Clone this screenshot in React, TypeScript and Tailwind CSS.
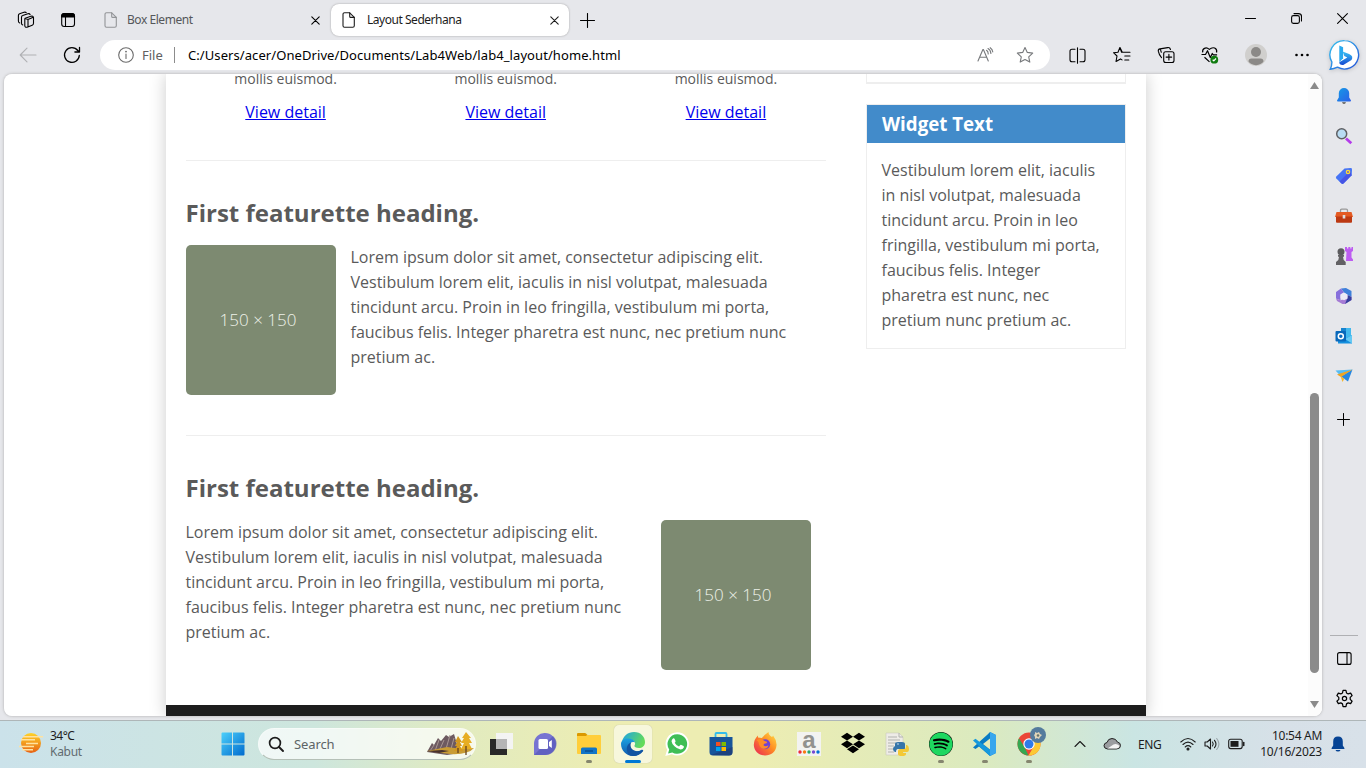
import React from 'react';
import { FaDropbox, FaSpotify } from 'react-icons/fa';

const LOREM =
  'Lorem ipsum dolor sit amet, consectetur adipiscing elit. Vestibulum lorem elit, iaculis in nisl volutpat, malesuada tincidunt arcu. Proin in leo fringilla, vestibulum mi porta, faucibus felis. Integer pharetra est nunc, nec pretium nunc pretium ac.';

type IconProps = { className?: string; children: React.ReactNode; box?: string };

function Line({ className = 'size-5', children, box = '0 0 20 20' }: IconProps) {
  return (
    <svg viewBox={box} className={`shrink-0 ${className}`} fill="none" stroke="currentColor" strokeWidth="1.1" strokeLinecap="round" strokeLinejoin="round">
      {children}
    </svg>
  );
}

function Art({ className = 'size-6', children, box = '0 0 24 24' }: IconProps) {
  return (
    <svg viewBox={box} className={`shrink-0 ${className}`}>
      {children}
    </svg>
  );
}

const FileIcon = () => (
  <Line className="h-4 w-3.5" box="0 0 14 16">
    <path d="M2.5.8h5.2l4.6 4.6v8.3a1.5 1.5 0 0 1-1.5 1.5H2.5A1.5 1.5 0 0 1 1 13.700V2.300A1.500 1.500 0 0 1 2.500.8Z" />
    <path d="M7.700.8v3.600a1 1 0 0 0 1 1h3.600" />
  </Line>
);

const CloseIcon = () => (
  <Line className="size-[9px]" box="0 0 9 9">
    <path d="m.8.8 7.400 7.400M8.200.8.8 8.200" />
  </Line>
);

function TabBar() {
  return (
    <div className="flex h-10 items-start text-[12px]">
      <div className="flex h-10 w-[103px] items-center pl-[17px]">
        <Line className="size-[18px] text-black" box="0 0 18 18">
          <path d="M8.200 7.200 13.800 5.300q2.400-.6 2.700 1.400v5.500q0 1.500-1.300 2l-4.500 1.900q-2.500.8-2.900-1.300V8.300q0-.8.4-1.100ZM8.200 7.500l2.800 1 5.200-2.300M11 8.600v7.200" />
          <path d="M5.800 14q-1.300-.3-1.300-1.800V6.300q0-1.300 1.200-1.700l5.200-1.900q1.600-.4 2.200.7" />
          <path d="M2.700 12Q1.400 11.500 1.400 10V4.500q0-1.300 1.200-1.700L7 1.300q1.500-.4 2.200.3" />
        </Line>
        <Line className="ml-[25px] size-4 text-black" box="0 0 16 16">
          <rect x="1.700" y="1.700" width="12.800" height="12.800" rx="2.500" />
          <path d="M1.700 5V4q0-2.400 2.400-2.400h8q2.400 0 2.400 2.400v1Z" fill="currentColor" />
          <path d="M5.500 5v9.500" />
        </Line>
      </div>
      <div className="flex h-10 w-[228px] items-center pl-[1px] text-[#55575a]">
        <span className="text-[#929497]"><FileIcon /></span>
        <span className="ml-[9px] w-[181px] tracking-[-0.45px]">Box Element</span>
        <span className="ml-[3px] text-black"><CloseIcon /></span>
      </div>
      <div className="mt-1 flex h-8 w-[238px] items-center rounded-lg bg-white pl-[11px] text-[#1c1c1c] shadow-[0_0_2px_#999]">
        <FileIcon />
        <span className="ml-[11px] w-[180px] tracking-[-0.47px]">Layout Sederhana</span>
        <span className="ml-[3px]"><CloseIcon /></span>
      </div>
      <Line className="mt-[13px] ml-[11px] size-[15px] text-black" box="0 0 15 15"><path d="M7.500.5v14M.5 7.500h14" /></Line>
      <div className="ml-auto flex h-[37px] items-center text-black">
        <Line className="size-[11px]" box="0 0 11 11"><path d="M.5 5.500h10" /></Line>
        <Line className="ml-[35px] size-[11px]" box="0 0 11 11">
          <rect x=".6" y="2.600" width="7.800" height="7.800" rx="1.800" />
          <path d="M3 .6h4.500q3 0 3 3V8" />
        </Line>
        <Line className="mr-[18px] ml-[35px] size-[11px]" box="0 0 11 11"><path d="m.6.6 9.800 9.800M10.400.6.6 10.400" /></Line>
      </div>
    </div>
  );
}

function Toolbar() {
  return (
    <div className="flex h-[34px] items-start text-black">
      <div className="flex h-[30px] w-[100px] items-center pl-[19px]">
        <Line className="h-4 w-[18px] text-[#b0b1b4]" box="0 0 18 16"><path d="M17 8H1.200M8 1.200 1.200 8 8 14.800" /></Line>
        <Line className="ml-[26px] size-[18px]" box="0 0 18 18">
          <path strokeWidth="1.300" d="M16.300 9.500A7.400 7.400 0 1 1 14.800 4.500l1.400 1.300M16.500 1.500v4.500h-4.600" />
        </Line>
      </div>
      <div className="flex h-[30px] w-[950px] items-center rounded-full bg-white pl-[18px] text-[14px]">
        <Line className="size-4 text-[#6b6b6b]" box="0 0 16 16">
          <circle cx="8" cy="8" r="7.300" /><path d="M8 7v4.500" /><circle cx="8" cy="4.600" r=".4" />
        </Line>
        <span className="ml-2 w-8 pt-px text-[13px] text-[#606060]">File</span>
        <span className="h-4 w-px bg-[#8c8c8c]" />
        <span className="ml-[13px] w-[760px] pt-px text-[13px] tracking-[0.08px] whitespace-nowrap">C:/Users/acer/OneDrive/Documents/Lab4Web/lab4_layout/home.html</span>
        <Line className="ml-[29px] h-4 w-[17px] text-[#77797c]" box="0 0 17 16">
          <path d="M1 14 5.900 2.500h.5L11.300 14M2.700 10.200h6.900M9.500 3.300q1.800 1.200 1.700 3.600M11 1.500q2.700 1.500 2.900 5M13.200.7q2.300 1.500 2.600 4.300" />
        </Line>
        <Line className="ml-[22px] size-[18px] text-[#77797c]" box="0 0 18 18">
          <path d="m9 1.500 2.300 4.900 5.400.7-4 3.700 1.100 5.300L9 13.500l-4.800 2.600 1.100-5.300-4-3.700 5.400-.7Z" />
        </Line>
      </div>
      <div className="ml-[19px] flex h-[30px] items-center">
        <Line className="size-[17px]" box="0 0 17 17">
          <path d="M6 2.200H3q-2 0-2 2v8.600q0 2 2 2h3M11 2.200h3q2 0 2 2v8.600q0 2-2 2h-3M8.500.7v15.600" />
        </Line>
        <Line className="ml-[27px] size-[18px]" box="0 0 18 18">
          <path d="m10.800 6.300-2.200-.1L6.900 1.500 5 6.200l-4.500.5L4 10l-1 5.500 4.500-2.600 1.500 1M7 1.500l2.300 4.800H17M11.800 10H17M11.800 14h4" />
        </Line>
        <Line className="ml-[26px] size-[18px]" box="0 0 18 18">
          <rect x="6.700" y="5.700" width="10.300" height="10.800" rx="2" /><path d="M11.900 8.300v5.600M9.100 11.100h5.600M13.500 3.500q-.6-2.300-2.800-1.900L3 2.900Q1 3.300 1.300 5.200q.8 4 3.200 6.500M3.500 2.800q.1 2 .8 3.500" />
        </Line>
        <svg viewBox="0 0 18 18" className="ml-[26px] size-[18px]" fill="none" stroke="currentColor" strokeWidth="1.200" strokeLinejoin="round">
          <path d="M1.700 6.400C1 2.500 5 .5 8.300 3.400 12 .2 16.500 2 15.600 6.500M3.500 11.200l5 4.700M.5 8.500h4l2-3.800 2.800 6.800 2-4 1 1.300h3.800" />
          <circle cx="13.300" cy="13.700" r="3.900" fill="#107c10" stroke="none" /><path d="m11.700 13.800 1.100 1 2.200-2.300" stroke="#fff" />
        </svg>
        <svg viewBox="0 0 22 22" className="ml-[26px] size-[22px]">
          <circle cx="11" cy="11" r="11" fill="#d0cfcd" /><circle cx="11" cy="8" r="5" fill="#8b8987" /><path d="M3.500 17.500q0-3 3-3h9q3 0 3 3-2.300 3.300-7.500 3.700-5.200-.4-7.500-3.700" fill="#8b8987" />
        </svg>
        <Line className="ml-[27px] h-1 w-4" box="0 0 16 4"><g fill="currentColor" stroke="none"><circle cx="2.500" cy="2" r="1.300" /><circle cx="8" cy="2" r="1.300" /><circle cx="13.500" cy="2" r="1.300" /></g></Line>
        <svg viewBox="0 0 32 32" className="ml-[18px] size-8 drop-shadow-sm">
          <defs>
            <linearGradient id="ring" x1="0" y1="0" x2="1" y2="1"><stop stopColor="#35c2ee" /><stop offset="1" stopColor="#2352d9" /></linearGradient>
            <linearGradient id="bing" x1="0" y1="0" x2="0" y2="1"><stop stopColor="#38c0f3" /><stop offset="1" stopColor="#164bd3" /></linearGradient>
          </defs>
          <path d="M16.500 1.600a14.200 14.200 0 1 1-7 26.600q-3.800 1.700-7.200 2 1.500-2.800 1.600-7.200A14.200 14.200 0 0 1 16.500 1.600" fill="#fff" stroke="url(#ring)" strokeWidth="1.400" />
          <path d="m11.300 6.500 3.800 1.700v11l-3.800 4Z" fill="#29a9ee" />
          <path d="m11.300 23.200 8-4.600-3-1.600-1.700-4.400 6.500 2.500q4.800 2 2.400 6l-8.200 4.800q-4 .4-4-2.700" fill="url(#bing)" />
        </svg>
      </div>
    </div>
  );
}

const HeadingStyle = 'mt-[34px] h-9 text-[24px] leading-9 font-bold';

const Placeholder = ({ className = '' }: { className?: string }) => (
  <div className={`flex size-[150px] shrink-0 items-center justify-center rounded-[5px] bg-[#7d8a71] pr-[5px] pb-[2px] text-[17px] font-light text-[#edf2e9] ${className}`}>
    150 × 150
  </div>
);

function Page() {
  return (
    <div className="mx-[162px] flex h-[642px] w-[980px] shrink-0 flex-col bg-white font-['Open_Sans',sans-serif] text-[16px] leading-[25px] text-[#5a5a5a] shadow-[0_0_16px_#ccc]">
      <div className="flex h-[631px] gap-10 px-5">
        <main className="-ml-[0.5px] w-[640.5px]">
          <div className="grid h-[86px] grid-cols-3 gap-5 text-center">
            {['one', 'two', 'three'].map((column) => (
              <div key={column}>
                <p className="-mt-2 text-[14px]">mollis euismod.</p>
                <p className="mt-[9px]"><a className="text-[#0000ee] underline" href="#detail">View detail</a></p>
              </div>
            ))}
          </div>
          <section className="h-[275px] border-t border-[#eee]">
            <h2 className={HeadingStyle}>First featurette heading.</h2>
            <div className="mt-[14px] flex gap-[15px]">
              <Placeholder />
              <p>{LOREM}</p>
            </div>
          </section>
          <section className="border-t border-[#eee]">
            <h2 className={HeadingStyle}>First featurette heading.</h2>
            <div className="mt-[14px] flex gap-[15px]">
              <p className="w-[460px]">{LOREM}</p>
              <Placeholder />
            </div>
          </section>
        </main>
        <aside className="w-[260px]">
          <div className="h-2.5 border-x border-b-2 border-[#eee]" />
          <div className="mt-5 h-[245px] border border-[#eee]">
            <h3 className="h-[38px] bg-[#428bca] px-[15px] text-[18.720px] leading-[38px] font-bold text-white">Widget Text</h3>
            <p className="pt-[15px] pr-5 pl-[14.500px]">Vestibulum lorem elit, iaculis in nisl volutpat, malesuada tincidunt arcu. Proin in leo fringilla, vestibulum mi porta, faucibus felis. Integer pharetra est nunc, nec pretium nunc pretium ac.</p>
          </div>
        </aside>
      </div>
      <footer className="h-[11px] bg-[#1d1d1d]" />
    </div>
  );
}

function Scrollbar() {
  return (
    <div className="flex w-[15px] flex-col items-center bg-[#fcfcfc] pr-px">
      <svg viewBox="0 0 9 7" className="mt-2 h-[7px] w-[9px]"><path d="M4.500 0 9 7H0Z" fill="#8b8b8b" /></svg>
      <div className="mt-[304px] h-[280px] w-[9px] rounded-full bg-[#8b8b8b]" />
      <svg viewBox="0 0 9 7" className="mt-[28px] h-[7px] w-[9px]"><path d="M0 0h9L4.500 7Z" fill="#8b8b8b" /></svg>
    </div>
  );
}

function SideRail() {
  const cell = 'flex h-10 items-center justify-center';
  return (
    <div className="flex w-11 flex-col pt-[2px] text-black">
      <div className={cell}>
        <Art className="size-[18px]" box="0 0 18 18">
          <path d="M7 15h4l-1 2H8Z" fill="#777" /><path d="M9 1a5.200 5.200 0 0 1 5.200 5v4.500l1.800 3q.2 1-1 1H3q-1.200 0-1-1l1.800-3V6A5.200 5.200 0 0 1 9 1" fill="url(#railBell)" />
          <defs><linearGradient id="railBell" x1="0" x2="1" y2="1"><stop stopColor="#159be6" /><stop offset="1" stopColor="#2c5fe8" /></linearGradient></defs>
        </Art>
      </div>
      <div className={cell}>
        <Art className="size-[18px]" box="0 0 18 18">
          <path d="m11 11.500 5.300 4.800" stroke="#b43bea" strokeWidth="2.800" /><circle cx="6.700" cy="6.700" r="5" fill="#b8dcf3" stroke="#5f6064" strokeWidth="1.500" />
        </Art>
      </div>
      <div className={cell}>
        <Art className="size-[18px]" box="0 0 18 18">
          <path d="m9.500 1.500 6.200-.4q1.300 0 1.300 1.300l-.3 5.800L8.500 16.600q-1 .9-2 0L1.300 11.400q-.8-1 0-1.900Z" fill="#4674f5" /><path d="m16.700 8.200-8.200 8.400q-1 .9-2 0l-2-2L15 4Z" fill="#4654e5" /><circle cx="13" cy="5" r="1.700" fill="#7b6ebb" stroke="#ffdc33" strokeWidth="1.200" />
        </Art>
      </div>
      <div className={cell}>
        <Art className="size-[18px]" box="0 0 18 18">
          <path d="M5.500 5V3.500q0-1.300 1.300-1.300h4.400q1.300 0 1.300 1.300V5" fill="none" stroke="#999" strokeWidth="1.300" /><path d="M1.500 5h15L18 10H0Z" fill="#e45a22" /><path d="M1 9.500h16V15q0 .8-1 .8H2q-1 0-1-.8Z" fill="#bc3912" /><rect x="7.700" y="8" width="2.600" height="3.500" fill="#ddd" />
        </Art>
      </div>
      <div className={cell}>
        <Art className="size-[18px]" box="0 0 18 18">
          <path d="M10 0h2v1.500h1.300V0h2v1.500h1.200V0H18v4l-1.500 1v5.500l1.500 2v1.500h-7l.5-9L10 4Z" fill="#bd5df1" /><circle cx="6" cy="4.800" r="3.500" fill="#5b5b5e" /><path d="M3 8h6v1.800H8L8.700 13l2 2v3H1v-3l2.300-2L4 9.800H3Z" fill="#626164" />
        </Art>
      </div>
      <div className={cell}>
        <Art className="size-[18px]" box="0 0 18 18">
          <path d="M6 1.500 11 1 16.500 4v6L12.500 8 9 5.500Z" fill="#3f80da" /><path d="m1 5 5-3.500 3 4L5.500 8v5.300L1 11.500Z" fill="#8770dc" /><path d="m1 11.500 4.500 1.800 3.500-1 3.500-2V8l4 2v3L10 17H7.500L2 14Z" fill="#a57bd4" /><path d="M12.500 8 16.500 10v3L10 17l2.500-6Z" fill="#353f9c" /><path d="m9 5.500 3.500 2v4L9 13.300l-3.500-2v-4Z" fill="#eceaf6" />
        </Art>
      </div>
      <div className={cell}>
        <Art className="size-[18px]" box="0 0 18 18">
          <path d="M6 1h10v15H6Z" fill="#43b9ed" /><path d="M6 1h5v6H6Z" fill="#1784cf" /><path d="m3 8 7 4 7-4v8.500H3Z" fill="#1490df" /><path d="M17 8v8.500L10 12Z" fill="#65c9f3" /><rect x=".5" y="4" width="10.500" height="10.500" rx="1" fill="#0969bb" /><circle cx="5.800" cy="9.200" r="2.500" fill="none" stroke="#fff" strokeWidth="1.500" />
        </Art>
      </div>
      <div className={cell}>
        <Art className="size-[18px]" box="0 0 18 18">
          <path d="M.5 3.500 17.500 2.500 6 9.500Z" fill="#55bcf4" /><path d="M17.500 2.500 13 14.500l-7-5Z" fill="#2587e1" /><path d="m2 7.500 15.500-5L6 10Z" fill="#eda522" /><path d="m5.500 9.500 2 5.500 2-3.500Z" fill="#f3b72f" />
        </Art>
      </div>
      <div className="mt-[3px] flex h-10 items-center justify-center pr-px">
        <Line className="size-[13px]" box="0 0 13 13"><path strokeWidth="1" d="M6.500.5v12M.5 6.500h12" /></Line>
      </div>
      <div className="mx-auto mt-[196px] h-px w-7 bg-[#afb0b3]" />
      <div className="flex h-11 items-center justify-center">
        <Line className="h-[13px] w-[15px]" box="0 0 15 13"><rect x=".6" y=".6" width="13.500" height="11.800" rx="2" /><path d="M10 .6v11.800" /></Line>
      </div>
      <div className="flex h-9 items-center justify-center pt-px">
        <Line className="size-[19px]" box="0.500 -0.200 17 17">
          <path d="M7.200 3.300 7.700 1h2.600l.5 2.300 1.500.9 2.200-.7 1.300 2.200-1.700 1.600v1.800l1.700 1.600-1.300 2.200-2.200-.7-1.500.9-.5 2.500H7.700l-.5-2.500-1.500-.9-2.200.7-1.300-2.200 1.700-1.600V7.300L2.200 5.700l1.300-2.200 2.200.7Z" /><circle cx="9" cy="8.300" r="1.900" />
        </Line>
      </div>
    </div>
  );
}

function AppCell({ children, running = false, active = false }: { children: React.ReactNode; running?: boolean; active?: boolean }) {
  return (
    <div className="flex w-11 items-start justify-center pt-1">
      <div className={active ? 'relative flex h-[38px] w-[38px] items-center justify-center rounded-[5px] bg-white/55 shadow-[0_0_1px_#aaa]' : 'relative flex h-[38px] w-[38px] items-center justify-center'}>
        {children}
        {running && <i className={active ? 'absolute bottom-0 h-[3px] w-4 rounded-full bg-[#0078d4]' : 'absolute bottom-0 h-[3px] w-1.5 rounded-full bg-[#85866f]'} />}
      </div>
    </div>
  );
}

function Taskbar() {
  return (
    <div className="flex h-12 w-full border-t border-[#aeb6b8] bg-[linear-gradient(90deg,#cbe2ea_0%,#cde6dd_23%,#e2ebbf_34%,#ededb2_45%,#ededb2_55%,#dbeabf_72%,#cae5e3_83%,#d7e0e8_94%,#d8e1e9_100%)] text-[12px] text-[#1d1d1d]">
      <div className="flex w-[213px] items-center pl-[19px]">
        <Art className="mt-[-3px] size-6">
          <defs><linearGradient id="sun" x1="0" y1="0" x2="0" y2="1"><stop stopColor="#ffd328" /><stop offset="1" stopColor="#e66114" /></linearGradient></defs>
          <circle cx="12" cy="12" r="10" fill="url(#sun)" /><path d="M4 5.700h20M2 8.700h14M7 12.500h12M0 15.500h15M3 18.700h11" stroke="#ffe2a0" strokeWidth="1.400" />
        </Art>
        <div className="-mt-0.5 ml-[7px] leading-4">
          <div className="tracking-[-0.5px]">34°C</div><div className="tracking-[-0.3px] text-[#626c70]">Kabut</div>
        </div>
      </div>
      <div className="flex w-10 items-center justify-center pb-px">
        <Art className="size-6"><defs><linearGradient id="win" x1="0" y1="0" x2="1" y2="1"><stop stopColor="#4cd0fb" /><stop offset="1" stopColor="#006bce" /></linearGradient></defs><path fill="url(#win)" d="M.5 1.500Q.5.500 1.500.500h9.500v11H.5ZM12 .5h10.500q1 0 1 1v10H12ZM.5 12.500H11v11H1.500q-1 0-1-1ZM12 12.500h11.500v10q0 1-1 1H12Z" /></Art>
      </div>
      <div className="mt-[7px] ml-[5px] flex h-8 w-[218px] items-center rounded-full border border-b-[#b5c0b7] border-white/40 bg-white/70 pl-[9px]">
        <Line className="size-4" box="0 0 16 16"><circle cx="7" cy="7" r="5.400" strokeWidth="1.700" /><path d="m11 11 4 4" strokeWidth="1.900" /></Line>
        <span className="ml-[10px] w-[133px] pt-px text-[13px] tracking-[-0.1px] text-[#5d6466]">Search</span>
        <svg viewBox="0 0 48 24" className="h-6 w-12">
          <path d="m0 20 5-9 2 2 4-7 3 3 5-6 3 2 5-3 3 10 3 9-13 2Z" fill="#6d5a60" /><path d="m3 19 4-6m1 6 4-11m1 9 4-9m2 9 4-14m1 14 3-11" stroke="#a99793" strokeWidth="1" />
          <path d="m0 19 20-4 15 2 12-1q-6 7-24 6Z" fill="#c99c35" /><path d="m0 19 15-1 7 1-10 2Z" fill="#49322d" /><path d="m31 4-3 6h2l-2 4h2l-3 5h9l-3-5h2l-2-4h2Z" fill="#d3981f" /><path d="m39 0-4 6h2l-3 5h3l-3 6h11l-3-6h3l-3-5h2Z" fill="#e7ad23" /><path d="M31 16v5M39 14v9" stroke="#65411e" strokeWidth="1.300" />
        </svg>
      </div>
      <div className="ml-[3px] flex">
        <AppCell><Art><path d="M1 7h17v16H1Z" fill="#292929" /><path d="M7 1h17v16H7Z" fill="#f4f4f3" /><path d="M7 7h11v10H7Z" fill="#b5b5b5" /></Art></AppCell>
        <AppCell><Art><path d="M12 1a11 11 0 1 1 0 22H1V12A10.500 11 0 0 1 12 1" fill="#7774d2" /><path d="M20 4a11 11 0 0 1-8 19H1Z" fill="#5455b5" opacity=".6" /><rect x="5.500" y="7" width="9.500" height="10" rx="1.500" fill="#fff" /><path d="m16 10 2.800-2v8L16 14Z" fill="#fff" /></Art></AppCell>
        <AppCell running><Art><path d="M0 2q0-1 1-1h7q1 0 2 1.500l1 1.500H0Z" fill="#db9900" /><path d="M0 4h9l1-1h13q1 0 1 1v17q0 1-1 1H1q-1 0-1-1Z" fill="#ffce3b" /><path d="M4 22v-5q0-1.500 1.500-1.500h13q1.500 0 1.500 1.500v5Z" fill="#1175c7" /><path d="M8 19h8" stroke="#084f93" strokeWidth="1.500" /></Art></AppCell>
        <AppCell running active>
          <Art>
            <defs><linearGradient id="edge" x1="0" x2="1" y2=".4"><stop stopColor="#1da1e8" /><stop offset="1" stopColor="#63db5b" /></linearGradient><linearGradient id="edgeBlue" x1="0" y1="0" x2="0" y2="1"><stop stopColor="#1ba0e0" /><stop offset="1" stopColor="#105aae" /></linearGradient></defs>
            <path d="M1 10C2 4 7 0 13 0c7 0 11 5 11 10 0 4-3 6-6 6-3 0-5-1-4.500-2.500 2-3-1-6-5-6C5 7.500 2 9 1 10" fill="url(#edge)" /><path d="M0 12C0 8 4 6 8 6.500c3 .3 5.500 2 6 4C11 9 8.500 11 9 14c.6 5 6 7 11 4 1-.7 2.600 0 1.800 1C19 22.500 16 24 12 24 5 24 0 18 0 12" fill="url(#edgeBlue)" /><path d="M9 23.500c-5-4-4-11 1-13-2 6 3 11 11.500 7.500q1.200.2.500 1.200C19 23 14 25 9 23.500" fill="#1254a2" />
          </Art>
        </AppCell>
        <AppCell>
          <Art>
            <path d="M12.200.2a11.700 11.700 0 1 1-5.300 22.100L.3 24l1.800-6.300A11.700 11.700 0 0 1 12.200.2" fill="#fff" />
            <path d="M12.200 2.200a9.800 9.800 0 1 1-4.900 18.200l-4.200 1 1.100-4A9.800 9.800 0 0 1 12.200 2.200" fill="#3fbe56" />
            <path d="M8 6.500q1-.8 1.500.2l1 2.200q.3.800-.8 1.900 1.500 2.800 4.300 3.700l1.300-1.500q.5-.5 1.200-.1l2 1q.7.500.3 1.500-.9 2-3.300 2-3.300-.4-6-3.200-2.800-2.800-3-5Q6.700 7.500 8 6.500" fill="#fff" />
          </Art>
        </AppCell>
        <AppCell><Art><path d="M6.500 6V2q0-1 1-1h9q1 0 1 1v4" fill="none" stroke="#32bceb" strokeWidth="1.800" /><path d="M.5 5h23v15q0 3.500-3.500 3.500H4Q.5 23.500.5 20Z" fill="#17559b" /><path d="M2 23 23.500 15V20q0 3.500-3.500 3.500Z" fill="#223a72" opacity=".7" /><path d="M7 10h4.500v4H7Z" fill="#f25022" /><path d="M12.500 10H17v4h-4.500Z" fill="#7fba00" /><path d="M7 15h4.500v4H7Z" fill="#00a4ef" /><path d="M12.500 15H17v4h-4.500Z" fill="#ffb900" /></Art></AppCell>
        <AppCell>
          <Art><defs><linearGradient id="fox" x1="1" y1="0" x2="0" y2="1"><stop stopColor="#ffe34b" /><stop offset=".45" stopColor="#ff8c22" /><stop offset="1" stopColor="#e9205b" /></linearGradient></defs>
            <path d="M5 3.500v2l4 .5q2-3 6.500-6 0 3 3.500 5 1-1 1-1.500 4 5 3.500 10C23 20 18 23.500 12 23.500S1 19 .8 13Q1 7 5 3.500" fill="url(#fox)" /><circle cx="12.200" cy="12.200" r="5" fill="#7042d3" /><path d="M3.500 8Q8 6 12 9.300q3 .2 1.500 1.900-3 0-3 2 2 2 5 0-1 4-5.500 3.500-4-1.500-4.500-6.700Z" fill="#ff8c27" />
          </Art>
        </AppCell>
        <AppCell>
          <div className="flex size-6 flex-col items-center bg-[#f3f3f1]">
            <span className="h-[18px] font-['Liberation_Sans',sans-serif] text-[24px] leading-[15px] font-bold text-[#92928f]">a</span>
            <Art className="h-1 w-[22px]" box="0 0 22 4"><circle cx="2" cy="2" r="1.700" fill="#ed2939" /><circle cx="6.500" cy="2" r="1.700" fill="#f77a13" /><circle cx="11" cy="2" r="1.700" fill="#25a66b" /><circle cx="15.500" cy="2" r="1.700" fill="#774ad2" /><circle cx="20" cy="2" r="1.700" fill="#0072d6" /></Art>
          </div>
        </AppCell>
        <AppCell><FaDropbox className="mb-0.5 h-[26px] w-6 text-black" /></AppCell>
        <AppCell><Art><path d="M1 1h13l4 4v18H1Z" fill="#eeece7" stroke="#cbc9bd" strokeWidth=".6" /><path d="M14 1v4h4M3 5h9M3 8h12M3 11h8M3 14h6M3 17h6M3 20h6" fill="none" stroke="#b1b2ae" strokeWidth="1" /><path d="M10 14v-2q0-2 3-2h4q3 0 3 2v5h-7q-2 0-2 3h-1q-2-1-2-3t2-3Z" fill="#3675a9" /><path d="M21 13h1q2 1 2 4t-2 3h-4v1h3v1q0 2-4 2t-4-2v-3q0-2 2-2h4q2 0 2-2Z" fill="#f3c936" /><circle cx="13" cy="12" r=".7" fill="#fff" /></Art></AppCell>
        <AppCell running><span className="rounded-full bg-black"><FaSpotify className="size-6 text-[#1ed760]" /></span></AppCell>
        <AppCell running><Art><path d="m17 0 6 3v18l-6 3L6 14.500 2.500 17 0 15.500 14 3Z" fill="#087cc4" /><path d="m0 8.500 2.500-1.700L17 18v6L0 8.500" fill="#1499dd" /><path d="m17 0 6 3v18l-6 3Z" fill="#38a6ed" /><path d="m17 6.500-7 5.500 7 5.500Z" fill="#e4ebb9" /></Art></AppCell>
        <AppCell running>
          <Art>
            <circle cx="12" cy="12" r="11.500" fill="#eb4638" /><path d="M2 6.300 8 16l3.500 7.500A11.500 11.500 0 0 1 2 6.300" fill="#35a852" /><path d="M12 7h10.500A11.500 11.500 0 0 1 11.500 23.500L17 14Z" fill="#fcc934" /><circle cx="12" cy="12" r="5.700" fill="#fff" /><circle cx="12" cy="12" r="4.500" fill="#2f7bea" />
          </Art>
          <span className="absolute top-[2px] left-[20px] flex size-4 items-center justify-center rounded-full bg-[#547b9d]"><Art className="size-3" box="0 0 12 12"><path d="m3 3 2 1 2-1 1 2 2 1-2 2-1 2-2-1-2 1V8L2 6l1-1Z" fill="#e1d5b9" /><circle cx="6" cy="6.500" r="1.300" fill="#66746d" /></Art></span>
        </AppCell>
      </div>
      <div className="ml-auto flex items-center pb-px">
        <Line className="h-2 w-3" box="0 0 12 8"><path d="m1 6.500 5-5 5 5" /></Line>
        <Art className="ml-[17px] h-4 w-[18px]" box="0 0 18 16"><path d="M4.500 13Q1 12.500 1 9.800 1 7 4 6.500q1-4 5-4 4 0 5.500 3.600 3 .5 3 3.500 0 3.200-4 3.400Z" fill="#9b9da0" stroke="#222" /><path d="M4.500 12.500 10.500 8.500q2-1 4 0 2 1 2 1.500-.5 2.500-3.500 2.500Z" fill="#f4f4f4" /></Art>
        <span className="ml-[17px] w-[25px] pt-px text-[12px] tracking-[-0.4px]">ENG</span>
        <Line className="ml-[17px] h-3.5 w-4" box="0 0 16 14"><path d="M.8 5Q8-2 15.200 5M3 7.500q5-4.700 10 0M5.200 10q2.800-2.600 5.600 0" /><circle cx="8" cy="12" r="1" fill="currentColor" /></Line>
        <Line className="ml-2 h-3.5 w-4" box="0 0 16 14"><path d="M1 5h2.200L6.500 2v10L3.200 9H1Z" /><path d="M8.500 5q1.500 2 0 4M10.500 3.300q3 3.700 0 7.400" /><path d="M12.700 1.500q4.500 5.500 0 11" stroke="#9aa4a8" /></Line>
        <Line className="ml-2 h-3 w-[17px]" box="0 0 17 12"><rect x=".7" y="1.200" width="13.500" height="9.400" rx="2" /><rect x="2.500" y="3" width="8" height="5.800" fill="currentColor" stroke="none" /><path d="M15.700 4.500v3" strokeWidth="1.600" /></Line>
        <div className="ml-2.5 w-[67px] text-right leading-4 whitespace-nowrap"><div className="tracking-[-0.3px]">10:54 AM</div><div className="tracking-[-0.2px]">10/16/2023</div></div>
        <Art className="mr-5 ml-2 size-4" box="0 0 16 16"><path d="M8 .5q4.800 0 4.800 5v4l1.700 2.700q.3.800-.7.800H2.200q-1 0-.7-.8L3.200 9.500v-4q0-5 4.800-5M5.500 14h5q-.5 1.500-2.500 1.500T5.500 14" fill="#064394" /></Art>
      </div>
    </div>
  );
}

export default function App() {
  return (
    <div className="flex h-[768px] w-[1366px] flex-col overflow-hidden bg-[#e6e7eb] font-['Noto_Sans',sans-serif]">
      <TabBar />
      <Toolbar />
      <div className="flex h-[646px]">
        <div className="ml-1 h-[642px] w-[1318px] rounded-lg shadow-[0_0_3px_#aaa]">
          <div className="flex h-full justify-between overflow-hidden rounded-lg bg-white">
            <Page />
            <Scrollbar />
          </div>
        </div>
        <SideRail />
      </div>
      <Taskbar />
    </div>
  );
}
